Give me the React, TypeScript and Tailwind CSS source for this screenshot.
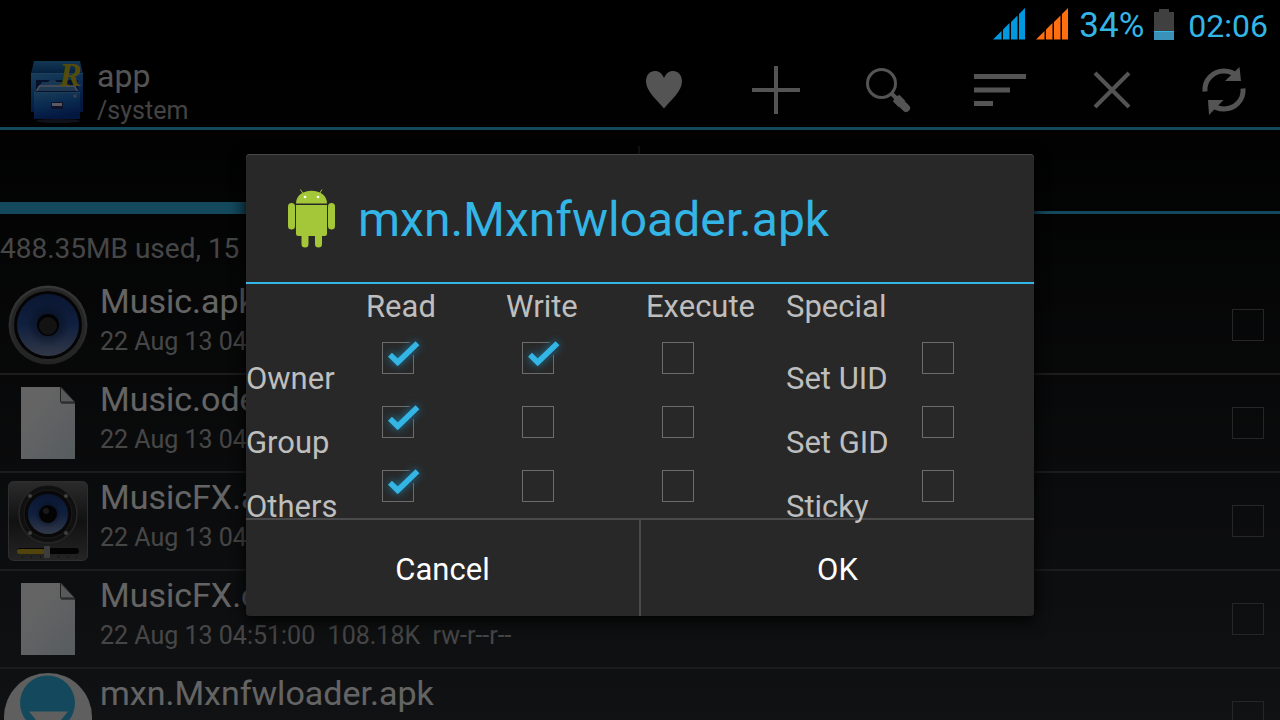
import { useState } from "react";
import type { ReactNode } from "react";

type FileRow = {
  name: string;
  info: string;
  icon: "speaker" | "doc" | "fx" | "app";
};

const files: FileRow[] = [
  { name: "Music.apk", info: "22 Aug 13 04:51:00", icon: "speaker" },
  { name: "Music.odex", info: "22 Aug 13 04:51:00", icon: "doc" },
  { name: "MusicFX.apk", info: "22 Aug 13 04:51:00", icon: "fx" },
  {
    name: "MusicFX.odex",
    info: "22 Aug 13 04:51:00  108.18K  rw-r--r--",
    icon: "doc",
  },
  { name: "mxn.Mxnfwloader.apk", info: "22 Aug 13 04:51:00", icon: "app" },
];

const permissionRows = [
  { label: "Owner", special: "Set UID" },
  { label: "Group", special: "Set GID" },
  { label: "Others", special: "Sticky" },
];

const columns = ["Read", "Write", "Execute"];

const SignalIcon = ({ color }: { color: string }) => (
  <svg width="33" height="32" viewBox="0 0 33 32" fill={color}>
    <path d="M0 31.5L8.5 23v8.5z" />
    <path d="M10 31.5v-10l6.500-6.500v16.500z" />
    <path d="M18 31.500V14l6.500-6.500v24z" />
    <path d="M26 31.500V6l6-6v31.500z" />
  </svg>
);

const BatteryIcon = () => (
  <svg width="20" height="31" viewBox="0 0 20 31">
    <path d="M0 3h5V0h10v3h5v20H0z" fill="#404040" />
    <path d="M0 22h20v9H0z" fill="#3a92b8" />
    <path d="M0 22h20v1H0z" fill="#33b5e5" />
  </svg>
);

const StatusBar = () => (
  <div className="flex h-[50px] items-center justify-end bg-black pr-3 text-[#33b5e5]">
    <div className="flex items-center gap-[10px] pb-[2px]">
      <SignalIcon color="#0099e0" />
      <SignalIcon color="#ff6f0f" />
    </div>
    <span className="ml-[10px] pt-[2px] text-[35px] leading-10">34%</span>
    <div className="ml-[10px] mr-[14px] pb-[2px]">
      <BatteryIcon />
    </div>
    <span className="pt-[2px] text-[32px] leading-10">02:06</span>
  </div>
);

const CabinetIcon = () => (
  <svg width="56" height="64" viewBox="0 0 56 64">
    <defs>
      <linearGradient id="cabTop" x1="0" y1="0" x2="0" y2="1">
        <stop offset="0" stopColor="#2f8ed0" />
        <stop offset="1" stopColor="#0f4f9c" />
      </linearGradient>
      <linearGradient id="cabBody" x1="0" y1="0" x2="0.3" y2="1">
        <stop offset="0" stopColor="#3f9ae0" />
        <stop offset="0.5" stopColor="#1a6cc8" />
        <stop offset="1" stopColor="#0a3aa0" />
      </linearGradient>
    </defs>
    <ellipse cx="29" cy="61" rx="22" ry="2" fill="#2b2b45" />
    <path d="M5 1h46l3 13H2z" fill="url(#cabTop)" />
    <path d="M2 13h52v39H2z" fill="url(#cabBody)" />
    <path d="M2 13h52v1H2z" fill="#4a9fe0" />
    <path d="M7 20h42v12H7z" fill="#132a66" />
    <path d="M11 25l2-3h6l2-2h5l2 2h8l3 3v2H11z" fill="#3f88cc" />
    <path d="M9 26h38v5H9z" fill="#4f8fd0" />
    <path d="M7.500 31l3-5h35l3 5" fill="none" stroke="#c6c8e6" strokeWidth="1.500" />
    <path d="M5 32h46v27H5z" fill="url(#cabBody)" />
    <path d="M5 32h46v1H5z" fill="#4a9fe0" />
    <rect x="22" y="42" width="12" height="7" rx="1" fill="#2a2f66" />
    <path d="M23 43h10v3H23z" fill="#e0e0f0" />
    <circle cx="46" cy="36" r="1.800" fill="#9aa0c0" />
    <text
      x="30"
      y="26"
      fontFamily="Liberation Serif, serif"
      fontStyle="italic"
      fontWeight="700"
      fontSize="34"
      fill="#cfbd22"
    >
      R
    </text>
  </svg>
);

const actions: { label: string; icon: ReactNode }[] = [
  {
    label: "Favorites",
    icon: (
      <path
        d="M28 46.500C21 38 10 29 10 19.500C10 13 14 9 19 9c4 0 7 2.500 9 7c2-4.500 5-7 9-7c5 0 9 4 9 10.500C46 29 35 38 28 46.500z"
        fill="#d2d2d2"
      />
    ),
  },
  {
    label: "Add",
    icon: (
      <path d="M28 4v48M4 28h48" stroke="#d2d2d2" strokeWidth="4" fill="none" />
    ),
  },
  {
    label: "Search",
    icon: (
      <g stroke="#d2d2d2" fill="none">
        <circle cx="21.500" cy="21.500" r="14" strokeWidth="3" />
        <path d="M31 31l5 5" strokeWidth="4" />
        <path d="M36 36l6 6" strokeWidth="9" />
        <path d="M38 38l8 8" strokeWidth="8" strokeLinecap="round" />
      </g>
    ),
  },
  {
    label: "Sort",
    icon: (
      <path
        d="M2 12h52v5H2zM2 25.500h36v5H2zM2 39h19v5H2z"
        fill="#d2d2d2"
      />
    ),
  },
  {
    label: "Close",
    icon: (
      <path
        d="M11 11l34 34M45 11L11 45"
        stroke="#d2d2d2"
        strokeWidth="4"
        fill="none"
      />
    ),
  },
  {
    label: "Refresh",
    icon: (
      <g>
        <g stroke="#d2d2d2" strokeWidth="5" fill="none">
          <path d="M9 29.500C8 18 17 9 28 9c6 0 10 2 13 5.500" />
          <path d="M47 26.500C48 38 39 47 28 47c-6 0-10-2-13-5.500" />
        </g>
        <path d="M43.500 5L45 19H29z" fill="#d2d2d2" />
        <path d="M13 53l-1-15h15.500z" fill="#d2d2d2" />
      </g>
    ),
  },
];

const ActionBar = () => (
  <header className="flex h-20 items-center border-b-[3px] border-[#33b5e5] pt-[2px]">
    <div className="flex items-center gap-3 pl-[29px] pt-1">
      <CabinetIcon />
      <div className="pt-[2px]">
        <h1 className="text-[32px] leading-9 text-[#d2d2d2]">app</h1>
        <p className="text-[25px] leading-[34px] text-[#a8a8a8]">/system</p>
      </div>
    </div>
    <div className="ml-auto flex">
      {actions.map((action) => (
        <button
          key={action.label}
          aria-label={action.label}
          className="flex w-28 items-center justify-center"
        >
          <svg width="56" height="56" viewBox="0 0 56 56">
            {action.icon}
          </svg>
        </button>
      ))}
    </div>
  </header>
);

const SpeakerIcon = () => (
  <svg width="80" height="80" viewBox="0 0 80 80">
    <defs>
      <linearGradient id="cone" x1="0" y1="0" x2="0" y2="1">
        <stop offset="0" stopColor="#1c3a7c" />
        <stop offset="0.5" stopColor="#28509c" />
        <stop offset="1" stopColor="#7c8cb4" />
      </linearGradient>
      <radialGradient id="coneShade">
        <stop offset="0.3" stopColor="#101c3c" stopOpacity="0.5" />
        <stop offset="0.7" stopColor="#101c3c" stopOpacity="0" />
      </radialGradient>
      <linearGradient id="rim" x1="0" y1="0" x2="0" y2="1">
        <stop offset="0" stopColor="#8a8a8a" />
        <stop offset="1" stopColor="#555555" />
      </linearGradient>
    </defs>
    <circle cx="40" cy="40" r="39.500" fill="url(#rim)" />
    <circle cx="40" cy="40" r="37" fill="#5c5c5c" />
    <circle cx="40" cy="40" r="34" fill="#0a0a0a" />
    <circle cx="40" cy="40" r="31" fill="url(#cone)" />
    <circle cx="40" cy="40" r="31" fill="url(#coneShade)" />
    <circle cx="40" cy="40" r="11" fill="#050505" />
    <circle cx="40" cy="41" r="9" fill="#303030" />
  </svg>
);

const DocIcon = () => (
  <svg width="80" height="80" viewBox="0 0 80 80">
    <defs>
      <linearGradient id="paper" x1="0" y1="0" x2="1" y2="1">
        <stop offset="0.3" stopColor="#fafafa" />
        <stop offset="1" stopColor="#d8e6ee" />
      </linearGradient>
    </defs>
    <path d="M13 4h40l14 15v57H13z" fill="url(#paper)" />
    <path d="M52.500 4v15H67z" fill="#dedede" stroke="#555555" strokeWidth="1" />
    <path d="M53 20h14" stroke="#333333" strokeWidth="1" />
  </svg>
);

const FxIcon = () => (
  <svg width="80" height="80" viewBox="0 0 80 80">
    <defs>
      <linearGradient id="fxBox" x1="0" y1="0" x2="0" y2="1">
        <stop offset="0" stopColor="#6c6c6c" />
        <stop offset="0.500" stopColor="#2c2c2c" />
        <stop offset="1" stopColor="#5c5c5c" />
      </linearGradient>
    </defs>
    <rect x="0.500" y="0.500" width="79" height="79" rx="5" fill="url(#fxBox)" stroke="#747474" />
    <circle cx="40" cy="33" r="29" fill="#282828" stroke="#606060" strokeWidth="1.500" />
    <circle cx="40" cy="33" r="24" fill="#161616" stroke="#484848" />
    {[
      [22, 15],
      [58, 15],
      [22, 52],
      [58, 52],
    ].map(([x, y]) => (
      <circle key={`${x}-${y}`} cx={x} cy={y} r="2" fill="#a0a0a0" />
    ))}
    <circle cx="40" cy="33" r="20" fill="url(#cone)" />
    <circle cx="40" cy="33" r="20" fill="url(#coneShade)" />
    <circle cx="40" cy="33" r="9" fill="#080808" />
    <circle cx="38" cy="30" r="3" fill="#404040" />
    <rect x="9" y="67" width="62" height="6" rx="3" fill="#080808" />
    <rect x="9" y="68" width="28" height="5" rx="2" fill="#c8a820" />
    <path d="M14 76h56" stroke="#101010" strokeWidth="1" strokeDasharray="1 8" />
    <rect x="36" y="65" width="6" height="12" rx="1" fill="#9a9a9a" />
  </svg>
);

const AppIcon = () => (
  <svg width="88" height="88" viewBox="0 0 88 88" className="-mx-1">
    <circle cx="44" cy="44" r="44" fill="#eeeeee" />
    <circle cx="43.500" cy="30" r="27.500" fill="#33b5e5" />
    <path d="M25 38.500h39L44.500 62z" fill="#eeeeee" />
  </svg>
);

const icons = {
  speaker: <SpeakerIcon />,
  doc: <DocIcon />,
  fx: <FxIcon />,
  app: <AppIcon />,
};

const FileList = () => (
  <ul>
    {files.map((file) => (
      <li
        key={file.name}
        className="flex h-[98px] items-center border-b-2 border-[#444648] px-2"
      >
        {icons[file.icon]}
        <div className="ml-3 whitespace-pre pb-[10px]">
          <p className="text-[34px] leading-[44px] text-[#fafafa]">
            {file.name}
          </p>
          <p className="text-[25px] leading-[38px] text-[#b0b0b0]">
            {file.info}
          </p>
        </div>
        <input
          type="checkbox"
          aria-label={`Select ${file.name}`}
          className="ml-auto mr-2 size-8 shrink-0 appearance-none border border-[#606060]"
        />
      </li>
    ))}
  </ul>
);

const AndroidIcon = () => (
  <svg width="64" height="64" viewBox="0 0 64 64" fill="#a4c639">
    <path d="M18 17.500C18 9.500 24.500 4.700 33.500 4.700S49 9.500 49 17.500z" />
    <path
      d="M22.500 3.500l2.500 4M44 3.500l-2.500 4"
      stroke="#a4c639"
      strokeWidth="1"
    />
    <path d="M18 19h31v28.500a2.500 2.500 0 0 1-2.500 2.500h-26a2.500 2.500 0 0 1-2.500-2.500z" />
    <rect x="10" y="17" width="7" height="26.500" rx="3.500" />
    <rect x="50" y="17" width="7" height="26.500" rx="3.500" />
    <rect x="23.500" y="46" width="7" height="15.500" rx="3.500" />
    <rect x="37" y="46" width="7" height="15.500" rx="3.500" />
    <circle cx="27" cy="11" r="1.300" fill="#ffffff" />
    <circle cx="40" cy="11" r="1.300" fill="#ffffff" />
  </svg>
);

type PermissionBoxProps = {
  label: string;
  checked: boolean;
  onChange: () => void;
};

const PermissionBox = ({ label, checked, onChange }: PermissionBoxProps) => (
  <label className="relative flex size-16 items-center justify-center">
    <input
      type="checkbox"
      aria-label={label}
      checked={checked}
      onChange={onChange}
      className="size-8 appearance-none border border-[#6c6c6c]"
    />
    {checked && (
      <svg
        viewBox="0 0 64 64"
        className="pointer-events-none absolute inset-0 size-16"
      >
        <path d="M43.500 15H49v14h-5.500z" fill="#282828" />
        <path
          d="M24 28.700L31.700 36.300L51.500 17.200"
          fill="none"
          stroke="#33b5e5"
          strokeWidth="5.500"
          className="drop-shadow-[0_0_4px_#1d7fa5]"
        />
      </svg>
    )}
  </label>
);

const PermissionDialog = () => {
  const [checked, setChecked] = useState<string[]>([
    "Owner Read",
    "Owner Write",
    "Group Read",
    "Others Read",
  ]);

  const toggle = (key: string) => {
    setChecked((prev) =>
      prev.includes(key) ? prev.filter((k) => k !== key) : [...prev, key]
    );
  };

  return (
    <div
      role="dialog"
      aria-labelledby="dialog-title"
      className="w-full max-w-[788px] rounded-sm bg-[#282828] shadow-[0_4px_16px_#000000] inset-shadow-[0_1px_0_#484848]"
    >
      <div className="flex h-[130px] items-center gap-4 border-b-2 border-[#33b5e5] px-8">
        <AndroidIcon />
        <h2 id="dialog-title" className="pt-1 text-5xl text-[#33b5e5]">
          mxn.Mxnfwloader.apk
        </h2>
      </div>
      <table className="w-full table-fixed text-left text-[31px] text-[#bebebe]">
        <thead>
          <tr>
            <td className="w-[120px]"></td>
            {columns.map((column) => (
              <th
                key={column}
                className="w-[140px] p-0 pt-1 font-normal leading-[38px]"
              >
                {column}
              </th>
            ))}
            <th className="w-[120px] p-0 pt-1 font-normal leading-[38px]">
              Special
            </th>
            <td></td>
          </tr>
        </thead>
        <tbody>
          {permissionRows.map((row) => (
            <tr key={row.label}>
              <th className="p-0 font-normal">
                <div className="h-16 pt-[34px] leading-[38px]">{row.label}</div>
              </th>
              {columns.map((column) => (
                <td key={column} className="p-0">
                  <PermissionBox
                    label={`${row.label} ${column}`}
                    checked={checked.includes(`${row.label} ${column}`)}
                    onChange={() => toggle(`${row.label} ${column}`)}
                  />
                </td>
              ))}
              <td className="p-0">
                <div className="h-16 whitespace-nowrap pt-[34px] leading-[38px]">
                  {row.special}
                </div>
              </td>
              <td className="p-0">
                <PermissionBox
                  label={row.special}
                  checked={checked.includes(row.special)}
                  onChange={() => toggle(row.special)}
                />
              </td>
            </tr>
          ))}
        </tbody>
      </table>
      <div className="flex h-[98px] border-t-2 border-[#4a4a4a] text-[31px] text-white">
        <button className="flex-1 border-r-2 border-[#4a4a4a] pt-1">
          Cancel
        </button>
        <button className="flex-1 pt-1">OK</button>
      </div>
    </div>
  );
};

const App = () => {
  return (
    <div className="flex h-screen flex-col overflow-hidden bg-black font-[Roboto,sans-serif]">
      <StatusBar />
      <div className="relative min-h-0 flex-1">
        <main className="h-full overflow-hidden bg-linear-to-b/srgb from-black to-[#2a2d31]">
          <ActionBar />
          <div className="flex h-[84px]">
            <div className="flex flex-1 items-center justify-end border-b-[12px] border-[#33b5e5]">
              <div className="h-10 w-[2px] bg-[#303030]"></div>
            </div>
            <div className="flex-1 border-b-[3px] border-[#33b5e5]"></div>
          </div>
          <p className="h-[63px] pt-4 text-[28px] leading-[38px] text-[#b0b0b0]">
            488.35MB used, 15
          </p>
          <FileList />
        </main>
        <div className="absolute inset-0 flex items-center justify-center bg-black/60">
          <PermissionDialog />
        </div>
      </div>
    </div>
  );
};

export default App;
